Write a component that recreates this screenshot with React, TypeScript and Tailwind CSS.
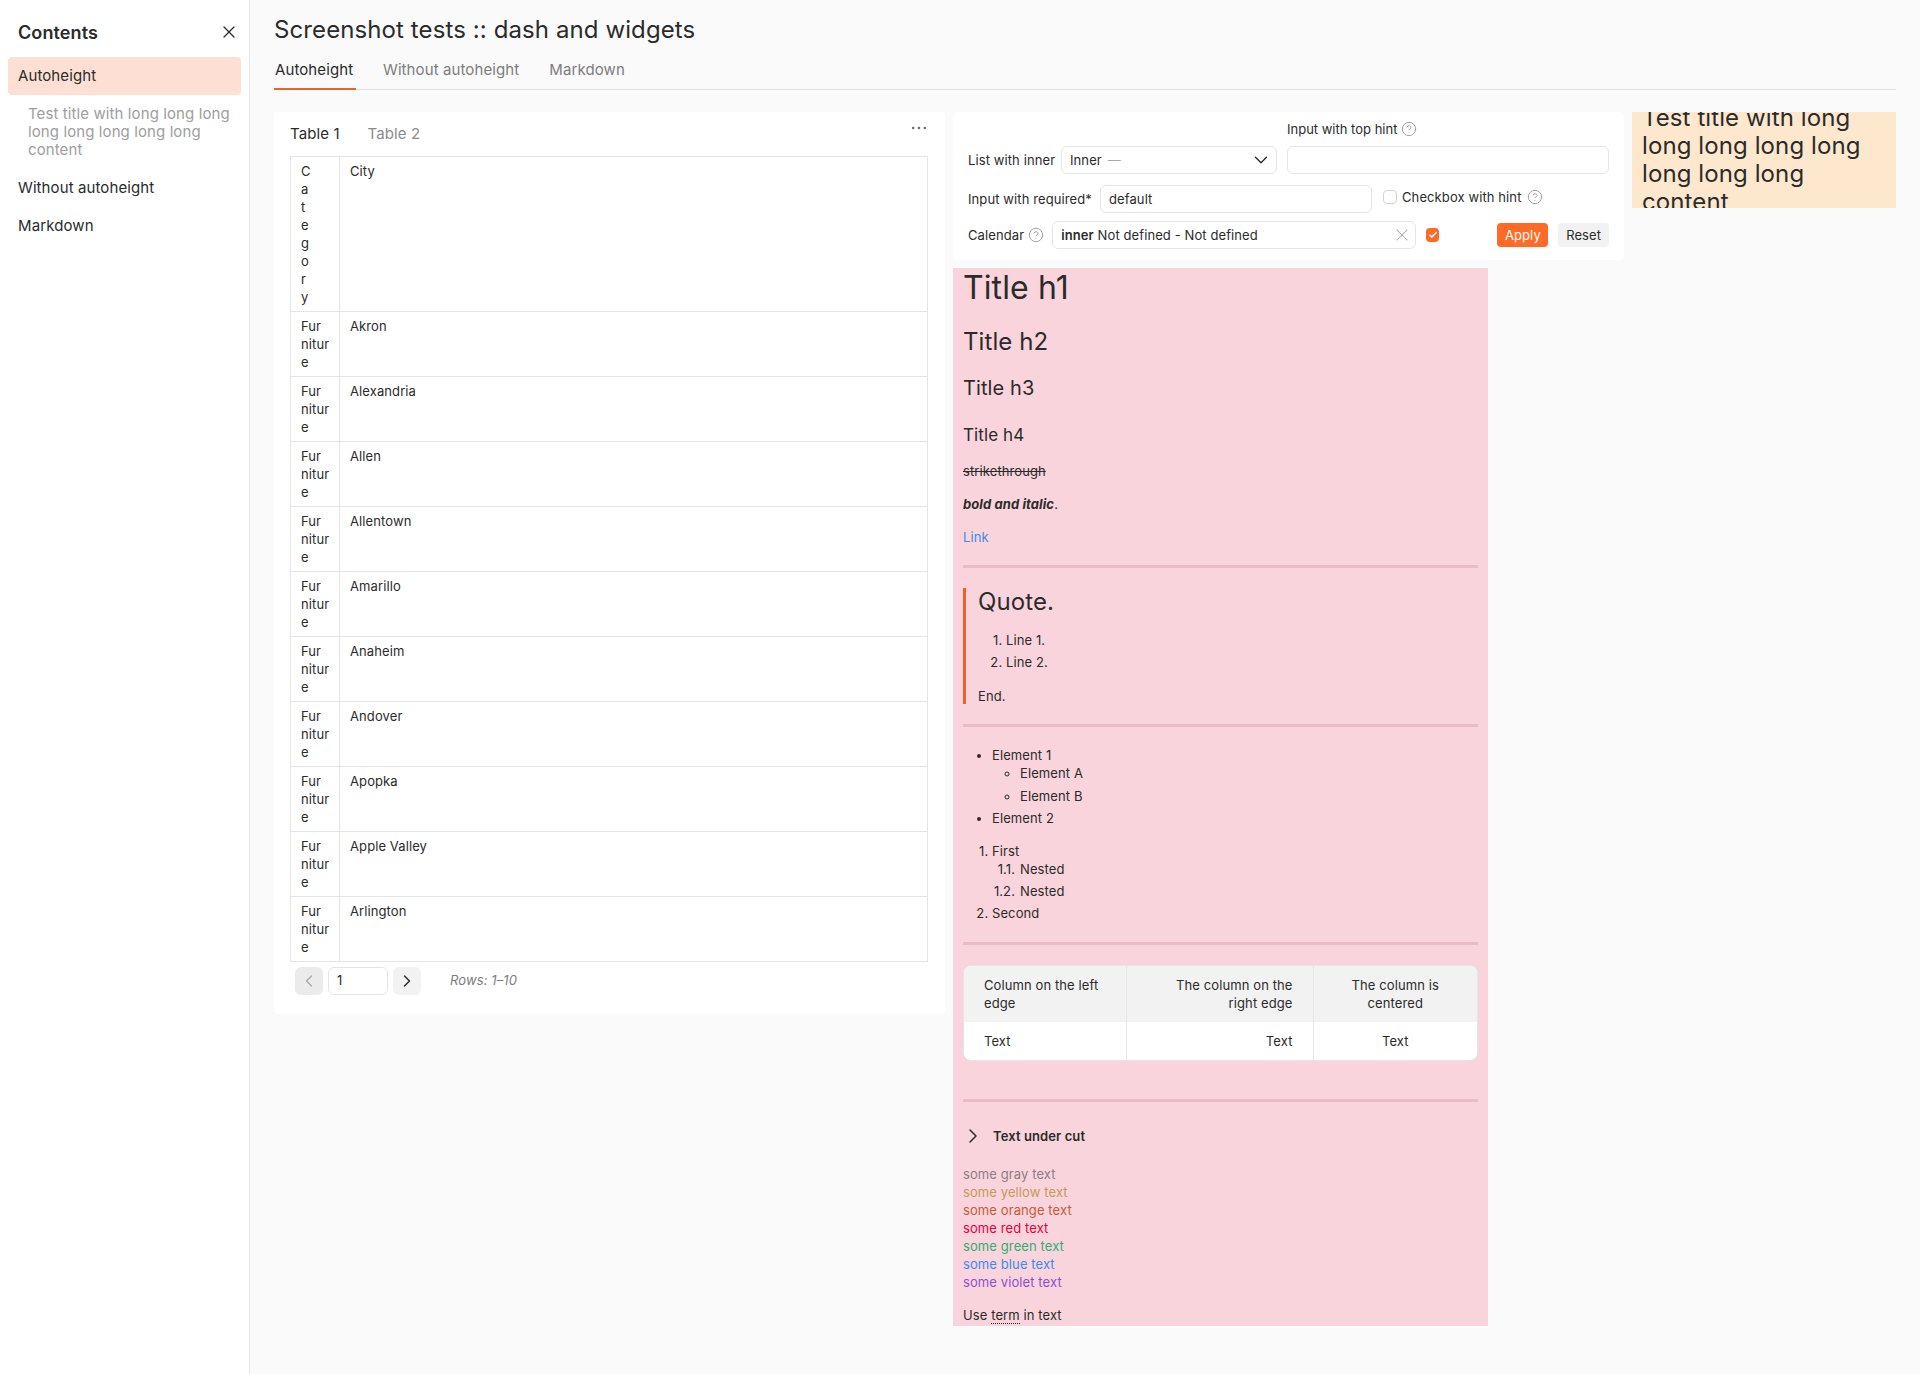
import { ChevronDown, ChevronLeft, ChevronRight, CircleHelp, Ellipsis, X, Check } from "lucide-react";

const cities = ["Akron", "Alexandria", "Allen", "Allentown", "Amarillo", "Anaheim", "Andover", "Apopka", "Apple Valley", "Arlington"];

function Hint() {
    return <CircleHelp className="w-[16px] h-[16px] text-[#9b9b9b]" strokeWidth={1.4} />;
}

function Sidebar() {
    return (
        <aside className="w-[250px] shrink-0 border-r border-[#e5e5e5] bg-white text-[15px] leading-[18px] text-[#2b2b2b]">
            <div className="flex items-center justify-between h-[57px] pl-[18px] pr-[10px] pt-[9px]">
                <span className="text-[18px] font-semibold">Contents</span>
                <X className="w-[20px] h-[20px] mt-[-2px]" strokeWidth={1.5} />
            </div>
            <div className="mx-[8px] w-[233px] h-[38px] flex items-center pl-[10px] rounded-[4px] bg-[#fde0d3]">Autoheight</div>
            <div className="pl-[28px] pr-[10px] mt-[10px] w-[240px] text-[#9e9e9e]">Test title with long long long long long long long long content</div>
            <div className="pl-[18px] mt-[20px] h-[18px]">Without autoheight</div>
            <div className="pl-[18px] mt-[20px] h-[18px]">Markdown</div>
        </aside>
    );
}

function TableCard() {
    return (
        <section className="w-[671px] h-[902px] shrink-0 bg-white rounded-[4px] pl-[16px] pr-[16px] text-[13px] leading-[18px] text-[#2b2b2b]">
            <div className="flex items-center h-[44px] relative">
                <div className="flex gap-[28px] text-[15px]">
                    <span>Table 1</span>
                    <span className="text-[#8c8c8c]">Table 2</span>
                </div>
                <Ellipsis className="absolute right-[0px] top-[6px] w-[20px] h-[20px] text-[#6b6b6b]" strokeWidth={1.25} />
            </div>
            <table className="w-[638px] border-collapse table-fixed">
                <colgroup>
                    <col className="w-[49px]" />
                    <col />
                </colgroup>
                <tbody>
                    <tr>
                        <td className="border border-[#e5e5e5] pl-[10px] py-[5px] align-top">
                            {"Category".split("").map((c, i) => (
                                <div key={i}>{c}</div>
                            ))}
                        </td>
                        <td className="border border-[#e5e5e5] pl-[10px] py-[5px] align-top">City</td>
                    </tr>
                    {cities.map((city) => (
                        <tr key={city}>
                            <td className="border border-[#e5e5e5] pl-[10px] py-[5px] align-top">
                                <div>Fur</div>
                                <div>nitur</div>
                                <div>e</div>
                            </td>
                            <td className="border border-[#e5e5e5] pl-[10px] py-[5px] align-top">{city}</td>
                        </tr>
                    ))}
                </tbody>
            </table>
            <div className="flex items-center ml-[5px] mt-[5px]">
                <div className="w-[28px] h-[28px] rounded-[6px] bg-[#ebebeb] flex items-center justify-center">
                    <ChevronLeft className="w-[20px] h-[20px] text-[#a8a8a8]" strokeWidth={1.5} />
                </div>
                <div className="ml-[5px] w-[60px] h-[28px] rounded-[6px] border border-[#e5e5e5] flex items-center pl-[8px] pb-[2px]">1</div>
                <div className="ml-[5px] w-[28px] h-[28px] rounded-[6px] bg-[#f2f2f2] flex items-center justify-center">
                    <ChevronRight className="w-[20px] h-[20px]" strokeWidth={1.75} />
                </div>
                <span className="ml-[29px] mt-[-2px] italic text-[#7d7d7d]">Rows: 1–10</span>
            </div>
        </section>
    );
}

function Filters() {
    return (
        <section className="w-[671px] h-[148px] shrink-0 bg-white rounded-[4px] pl-[15px] pr-[15px] text-[13px] leading-[18px] text-[#2b2b2b]">
            <div className="flex items-center gap-[4px] pl-[319px] h-[34px]">
                <span className="tracking-normal">Input with top hint</span>
                <Hint />
            </div>
            <div className="flex items-center">
                <span className="w-[93px]">List with inner</span>
                <div className="w-[216px] h-[28px] rounded-[6px] border border-[#e5e5e5] flex items-center pl-[8px] pr-[4px]">
                    <span>Inner</span>
                    <span className="ml-[6px] text-[#a8a8a8]">—</span>
                    <ChevronDown className="ml-auto w-[22px] h-[22px]" strokeWidth={1.5} />
                </div>
                <div className="ml-[10px] w-[322px] h-[28px] rounded-[6px] border border-[#e5e5e5]"></div>
            </div>
            <div className="flex items-center mt-[11px]">
                <span className="w-[132px]">Input with required*</span>
                <div className="w-[272px] h-[28px] rounded-[6px] border border-[#e5e5e5] flex items-center pl-[8px]">default</div>
                <div className="ml-[11px] flex items-center gap-[5px] mt-[-5px]">
                    <span className="w-[14px] h-[14px] rounded-[4px] border border-[#d4d4d4]"></span>
                    <span>Checkbox with hint</span>
                    <Hint />
                </div>
            </div>
            <div className="flex items-center mt-[8px]">
                <span>Calendar</span>
                <span className="ml-[4px]"><Hint /></span>
                <div className="ml-[8px] w-[365px] h-[28px] rounded-[6px] border border-[#e5e5e5] flex items-center pl-[8px] pr-[3px]">
                    <span><span className="font-semibold">inner</span> Not defined - Not defined</span>
                    <X className="ml-auto w-[20px] h-[20px] text-[#a8a8a8]" strokeWidth={1.25} />
                </div>
                <span className="ml-[10px] w-[14px] h-[14px] rounded-[4px] bg-[#ff6a26] flex items-center justify-center">
                    <Check className="w-[10px] h-[10px] text-white" strokeWidth={3.5} />
                </span>
                <span className="ml-[58px] w-[51px] h-[24px] rounded-[4px] bg-[#ff6a26] text-white flex items-center justify-center">Apply</span>
                <span className="ml-[10px] w-[51px] h-[24px] rounded-[4px] bg-[#f2f2f2] flex items-center justify-center">Reset</span>
            </div>
        </section>
    );
}

function Rule({ className }: { className: string }) {
    return <div className={"h-[3px] bg-[#e7bcc6] " + className}></div>;
}

function Markdown() {
    return (
        <section className="w-[535px] h-[1058px] overflow-hidden bg-[#fad4dd] px-[10px] text-[13px] leading-[18px] text-[#2b2b2b]">
            <h1 className="text-[32px] leading-[40px]">Title h1</h1>
            <h2 className="mt-[18px] text-[24px] leading-[32px]">Title h2</h2>
            <h3 className="mt-[18px] text-[20px] leading-[24px]">Title h3</h3>
            <h4 className="mt-[25px] text-[17px] leading-[20px]">Title h4</h4>
            <p className="mt-[17px] line-through">strikethrough</p>
            <p className="mt-[15px]"><strong className="italic font-bold">bold and italic</strong>.</p>
            <p className="mt-[15px] text-[#3a8be8]">Link</p>
            <Rule className="mt-[19px]" />
            <blockquote className="mt-[20px] h-[116px] border-l-[3px] border-[#f0602a] pl-[12px]">
                <p className="text-[24px] leading-[28px]">Quote.</p>
                <ol className="mt-[15px] list-decimal pl-[28px] marker:[font-variant-numeric:normal]">
                    <li>Line 1.</li>
                    <li className="mt-[4px]">Line 2.</li>
                </ol>
                <p className="mt-[16px]">End.</p>
            </blockquote>
            <Rule className="mt-[20px]" />
            <ul className="mt-[19px] list-disc pl-[29px]">
                <li>
                    Element 1
                    <ul className="list-[circle] pl-[28px]">
                        <li>Element A</li>
                        <li className="mt-[5px]">Element B</li>
                    </ul>
                </li>
                <li className="mt-[4px]">Element 2</li>
            </ul>
            <ol className="mt-[15px] list-decimal pl-[29px] marker:[font-variant-numeric:normal]">
                <li>
                    First
                    <div className="flex ml-[-1px]">
                        <span className="w-[24px] text-right">1.1.</span>
                        <span className="ml-[5px]">Nested</span>
                    </div>
                    <div className="flex ml-[-1px] mt-[4px]">
                        <span className="w-[24px] text-right">1.2.</span>
                        <span className="ml-[5px]">Nested</span>
                    </div>
                </li>
                <li className="mt-[4px]">Second</li>
            </ol>
            <Rule className="mt-[20px]" />
            <div className="mt-[20px] rounded-[8px] overflow-hidden border border-[#e5e5e5] bg-white">
                <table className="w-full border-collapse table-fixed">
                    <colgroup>
                        <col className="w-[162px]" />
                        <col className="w-[187px]" />
                        <col />
                    </colgroup>
                    <thead>
                        <tr className="bg-[#f2f2f2]">
                            <th className="font-normal text-left px-[20px] py-[10px] border-r border-[#e5e5e5]">Column on the left edge</th>
                            <th className="font-normal text-right px-[20px] py-[10px] border-r border-[#e5e5e5]">The column on the right edge</th>
                            <th className="font-normal text-center px-[20px] py-[10px]">The column is centered</th>
                        </tr>
                    </thead>
                    <tbody>
                        <tr>
                            <td className="text-left px-[20px] py-[10px] border-r border-[#e5e5e5]">Text</td>
                            <td className="text-right px-[20px] py-[10px] border-r border-[#e5e5e5]">Text</td>
                            <td className="text-center px-[20px] py-[10px]">Text</td>
                        </tr>
                    </tbody>
                </table>
            </div>
            <Rule className="mt-[38px]" />
            <div className="mt-[25px] h-[18px] flex items-center font-semibold">
                <ChevronRight className="ml-[-2px] w-[24px] h-[24px] shrink-0" strokeWidth={1.5} />
                <span className="ml-[8px]">Text under cut</span>
            </div>
            <div className="mt-[20px]">
                <div className="text-[#8d7c82]">some gray text</div>
                <div className="text-[#c39a58]">some yellow text</div>
                <div className="text-[#c8593a]">some orange text</div>
                <div className="text-[#e6003c]">some red text</div>
                <div className="text-[#30ad70]">some green text</div>
                <div className="text-[#3a8be8]">some blue text</div>
                <div className="text-[#8a50cf]">some violet text</div>
            </div>
            <p className="mt-[15px]">
                Use <span className="border-b border-dotted border-[#262626]">term</span> in text
            </p>
        </section>
    );
}

export default function App() {
    return (
        <div className="flex w-[1920px] h-[1374px] bg-[#fafafa] overflow-hidden tracking-[0.1px]" style={{ fontFamily: "Inter, sans-serif" }}>
            <Sidebar />
            <main className="flex-1 pl-[24px] pr-[24px]">
                <h1 className="text-[24px] leading-[28px] pt-[16px] h-[44px] text-[#2b2b2b]">Screenshot tests :: dash and widgets</h1>
                <div className="flex items-start h-[46px] border-b border-[#e0e0e0] text-[15px] text-[#8c8c8c]">
                    <div className="h-[46px] w-[82px] pl-[1px] pt-[17px] leading-[18px] border-b-2 border-[#f0602a] text-[#2b2b2b]">Autoheight</div>
                    <div className="ml-[27px] pt-[17px] leading-[18px] text-[#7d7d7d]">Without autoheight</div>
                    <div className="ml-[30px] pt-[17px] leading-[18px] text-[#7d7d7d]">Markdown</div>
                </div>
                <div className="flex gap-[8px] mt-[22px]">
                    <TableCard />
                    <div className="flex flex-col gap-[8px]">
                        <div className="flex items-start gap-[8px]">
                            <Filters />
                            <div className="w-[264px] h-[96px] overflow-hidden flex items-center bg-[#fde8cd] pl-[10px] pr-[10px] text-[24px] leading-[28px] text-[#2b2b2b]">
                                <span className="shrink-0 w-[244px]">Test title with long long long long long long long long content</span>
                            </div>
                        </div>
                        <Markdown />
                    </div>
                </div>
            </main>
        </div>
    );
}
